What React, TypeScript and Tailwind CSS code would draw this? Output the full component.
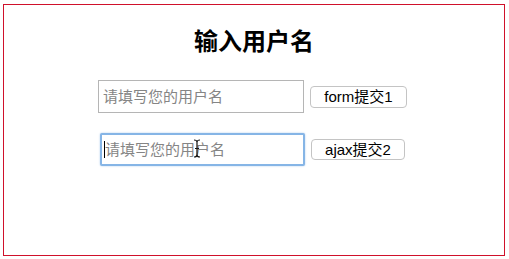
import React from "react";

export default function App() {
  const cjk = { fontFamily: '"Liberation Sans", "Noto Sans CJK SC", sans-serif' };
  return (
    <div className="w-[509px] h-[259px] bg-white pt-[4px] pl-[3px]" style={cjk}>
      <div className="w-[502px] h-[252px] border border-[#d0112b] flex flex-col">
        <h2 className="mt-[22px] text-center text-[24px] leading-[30px] font-bold text-black">输入用户名</h2>
        <div className="mt-[23px] ml-[94px] flex items-center gap-[6px]">
          <input
            readOnly
            placeholder="请填写您的用户名"
            className="w-[206px] h-[33px] border border-[#b5b5b5] px-[4px] text-[15px] text-black placeholder:text-[#858585] outline-none bg-white"
          />
          <button className="w-[97px] h-[22px] rounded-[4px] border border-[#c4c4c4] bg-white text-[15px] leading-[20px] text-black">
            form提交1
          </button>
        </div>
        <div className="mt-[20px] ml-[96px] flex items-center gap-[6px]">
          <div className="relative">
            <input
              readOnly
              placeholder="请填写您的用户名"
              className="w-[205px] h-[33px] rounded-[2px] border-2 border-[#86b5e6] px-[3px] text-[15px] text-black placeholder:text-[#858585] outline-none bg-white shadow-[0_0_2px_#a8c8ec]"
            />
            <span className="absolute left-[4px] top-[8px] w-[1px] h-[17px] bg-black" />
            <svg className="absolute left-[93px] top-[6px]" width="8" height="19" viewBox="0 0 8 19">
              <path d="M1 1 C3 1 4 2 4 3 L4 16 C4 17 3 18 1 18 M7 1 C5 1 4 2 4 3 M4 16 C4 17 5 18 7 18 M2 9.5 L6 9.5" stroke="#111" strokeWidth="1.2" fill="none" />
            </svg>
          </div>
          <button className="w-[94px] h-[21px] rounded-[4px] border border-[#c4c4c4] bg-white text-[15px] leading-[19px] text-black">
            ajax提交2
          </button>
        </div>
      </div>
    </div>
  );
}
